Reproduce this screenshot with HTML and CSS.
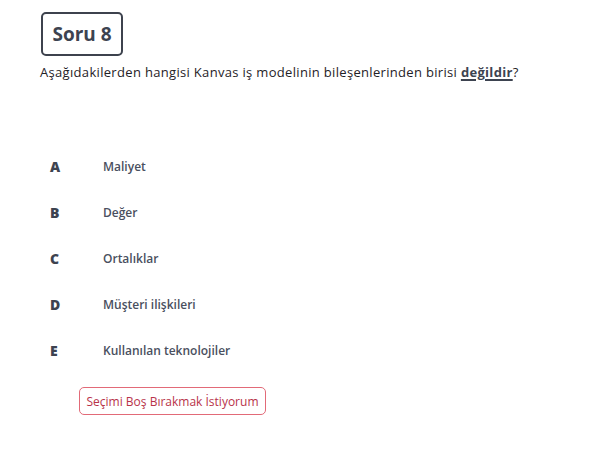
FILE: index.html
```html
<!DOCTYPE html>
<html lang="tr">
<head>
<meta charset="utf-8">
<link rel="stylesheet" href="styles.css">
</head>
<body>
<div class="page">
  <div class="title-box">Soru 8</div>
  <p class="question">Aşağıdakilerden hangisi Kanvas iş modelinin bileşenlerinden birisi <u class="em">değildir</u>?</p>
  <ul class="options">
    <li class="option"><span class="letter">A</span><span class="label">Maliyet</span></li>
    <li class="option"><span class="letter">B</span><span class="label">Değer</span></li>
    <li class="option"><span class="letter">C</span><span class="label">Ortalıklar</span></li>
    <li class="option"><span class="letter">D</span><span class="label">Müşteri ilişkileri</span></li>
    <li class="option"><span class="letter">E</span><span class="label">Kullanılan teknolojiler</span></li>
  </ul>
  <button class="skip">Seçimi Boş Bırakmak İstiyorum</button>
</div>
</body>
</html>
```
FILE: styles.css
```css
* { box-sizing: border-box; }
body {
  margin: 0;
  background: #fff;
  font-family: "Open Sans", "Noto Sans", sans-serif;
  color: #2b2f36;
}
.page {
  padding: 12px 0 0 40px;
  display: flex;
  flex-direction: column;
  align-items: flex-start;
}
.title-box {
  margin-left: 1px;
  width: 82px;
  height: 44px;
  border: 2px solid #3d424d;
  border-radius: 5px;
  display: flex;
  align-items: center;
  justify-content: center;
  font-size: 19px;
  font-weight: 700;
  color: #3d4350;
}
.question {
  margin: 7px 0 0 0;
  font-size: 13px;
  line-height: 18px;
  letter-spacing: 0.32px;
  color: #1f2227;
}
.em {
  font-weight: 700;
  color: #3d4350;
  text-decoration-thickness: 2px;
  text-underline-offset: 2px;
}
.options {
  list-style: none;
  margin: 76px 0 0 0;
  padding: 0 0 0 10px;
  display: flex;
  flex-direction: column;
  gap: 28px;
}
.option {
  display: flex;
  align-items: center;
  height: 18px;
}
.letter {
  width: 53px;
  font-size: 14px;
  font-weight: 800;
  color: #3d4350;
}
.label {
  font-size: 12px;
  font-weight: 600;
  color: #4a5060;
}
.skip {
  margin: 28px 0 0 39px;
  width: 187px;
  height: 28px;
  border: 1px solid #e26a78;
  border-radius: 5px;
  background: #fff;
  color: #b8334a;
  font-family: inherit;
  font-size: 12px;
  padding: 0;
}
```
